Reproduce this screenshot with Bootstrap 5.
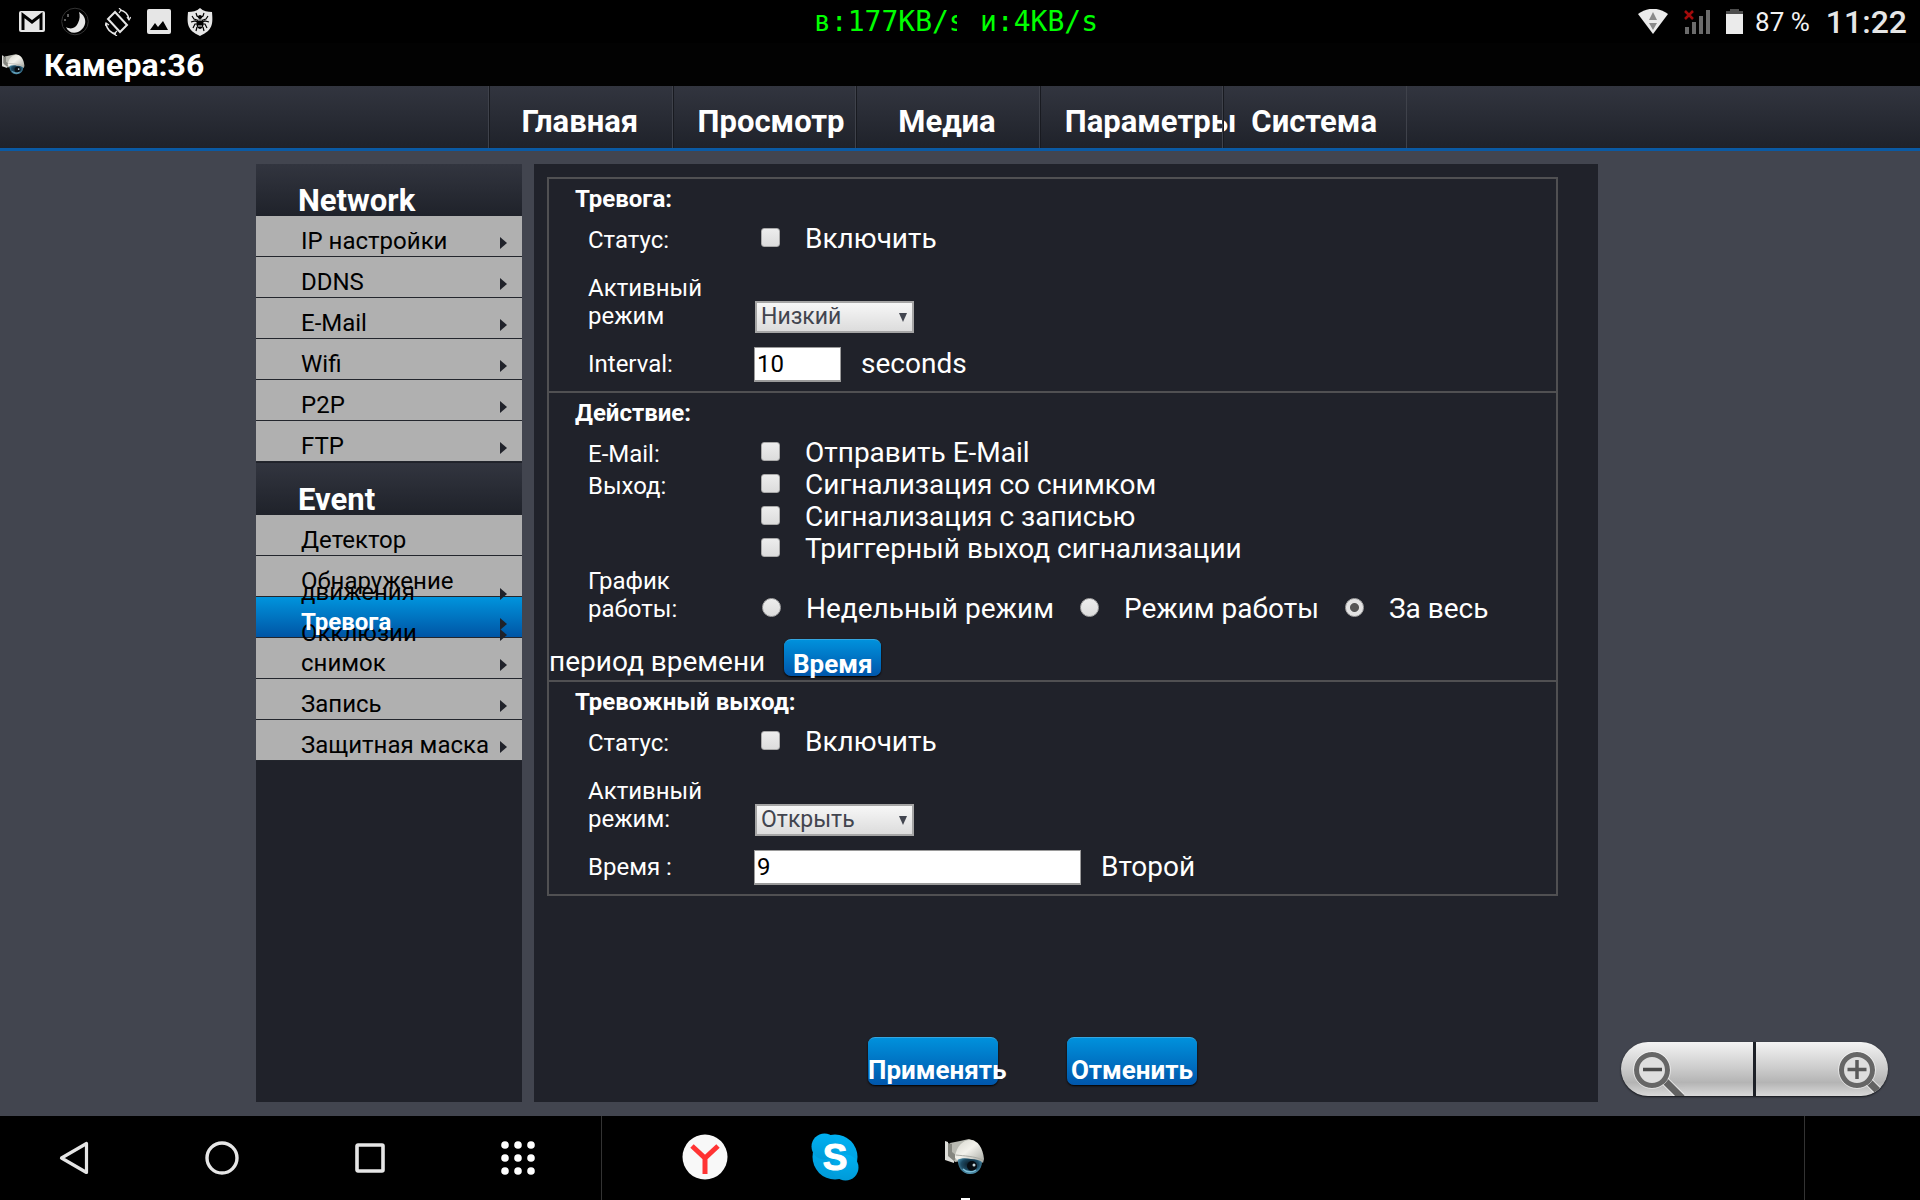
<!DOCTYPE html>
<html lang="ru">
<head>
<meta charset="utf-8">
<meta name="viewport" content="width=device-width, initial-scale=1">
<title>Камера:36</title>
<link href="https://cdn.jsdelivr.net/npm/bootstrap@5.3.0/dist/css/bootstrap.min.css" rel="stylesheet">
<style>
  body { font-family: Roboto, "Noto Sans", sans-serif; background: #42454f; color: #fff; }
  a { text-decoration: none; }
  button { font-family: inherit; }

  /* Android status bar and window title */
  .status-bar { height: 43px; background: #000; padding: 0 13px 0 19px; }
  .status-icons { gap: 16px; }
  .net-speed { font: 28px/36px "DejaVu Sans Mono", monospace; color: #0f0; gap: 23px; left: 814px; top: 4px; }
  .speed-down { width: 143px; white-space: nowrap; overflow: hidden; }
  .battery-text { font-size: 26px; line-height: 36px; color: #f2f2f2; }
  .clock-text { font-size: 32px; line-height: 36px; font-weight: 500; color: #e6e6e6; }
  .title-bar { height: 43px; background: #020202; padding-left: 2px; gap: 19px; }
  .title-bar h1 { font-size: 32px; line-height: 40px; font-weight: 700; }

  /* Top navigation */
  .top-nav { height: 65px; background: linear-gradient(#32353f, #1f222a); border-bottom: 3px solid #0a5aa4; padding: 0 513px 0 488px; }
  .top-nav .nav-cell { flex: 1 1 0; min-width: 0; height: 62px; border-left: 1px solid #3f424b; box-shadow: inset 1px 0 #181a20; padding: 18px 26px 0 25px; }
  .top-nav .nav-cell:last-child { border-right: 1px solid #3f424b; }
  .top-nav a { display: block; color: #fff; font-size: 31px; line-height: 36px; font-weight: 700; text-align: center; white-space: nowrap; }

  /* Workspace */
  .workspace { padding: 13px 322px 14px 256px; gap: 12px; }
  .side-panel { width: 266px; background: #20222a; }
  .side-panel h2 { font-size: 31px; line-height: 32px; font-weight: 700; height: 52px; padding: 21px 0 0 42px; background: linear-gradient(#32353f, #1f222a); }
  .menu-group + .menu-group { margin-top: 1px; }
  .menu-link { display: block; height: 41px; padding: 20px 15px 0 45px; background: #b0b0b0; border-bottom: 1px solid #23262d; color: #000; font-size: 24px; line-height: 11px; white-space: nowrap; }
  .menu-line { display: block; height: 11px; }
  .arrowed::before { content: ""; float: right; clear: right; margin: 1px 0 -3px; border: solid transparent; border-width: 6px 0 6px 7px; border-left-color: #20222a; }
  .menu-link.current { background: linear-gradient(#0094dd, #0055a5); }
  .current .menu-line:first-child { position: relative; color: #fff; font-weight: 700; }

  .main-panel { background: #20222a; padding: 13px 40px 17px 13px; }
  .settings-box { border: 2px solid #505052; border-top: 0; }
  .settings-box section { border-top: 2px solid #505052; padding: 6px 0 9px; }
  .settings-box h3 { font-size: 24px; line-height: 28px; font-weight: 700; padding-left: 26px; margin-bottom: 10px; }
  .line-row { display: flex; align-items: baseline; padding-left: 39px; font-size: 28px; line-height: 32px; }
  .cap-label { width: 167px; flex: none; font-size: 24px; line-height: 28px; }
  .two-line { height: 59px; margin-top: 19px; }
  .field-line { height: 36px; margin-top: 13px; align-items: center; }
  .tick { appearance: none; flex: none; align-self: flex-start; width: 19px; height: 19px; margin: 5px 25px 0 6px; border: 1px solid #a9a9a9; border-radius: 3px; background: linear-gradient(#ededed, #dcdcdc); }
  .tick[type=radio] { border-radius: 50%; margin-left: 7px; }
  .tick[type=radio]:checked { background: radial-gradient(circle, #555 0 4px, #e3e3e3 5px); }
  .choices label + .tick[type=radio] { margin-left: 26px; }
  .drop { appearance: none; width: 159px; height: 32px; border: 2px solid #a5a5a5; border-radius: 0; padding: 0 6px 1px 4px; color: #42454f; font-size: 23px; line-height: 26px;
    background: linear-gradient(#f7f7f7, #dcdcdc); }
  .drop-wrap { position: relative; }
  .drop-wrap::after { content: ""; position: absolute; right: 7px; top: 12px; border: solid transparent; border-width: 9px 4px 0; border-top-color: #42454f; pointer-events: none; }
  .entry { height: 35px; border: 2px solid #9a9a9a; border-width: 1px 1px 2px; border-radius: 0; background: #fff; color: #000; font-size: 24px; line-height: 28px; padding: 1px 2px 0; margin-left: -1px; margin-right: 20px; }
  .entry-short { width: 87px; }
  .entry-long { width: 327px; }
  .schedule-line { height: 60px; padding-top: 2px; align-items: flex-start; }
  .schedule-line .choices { padding-top: 26px; align-items: baseline; }
  .rest-line { padding-left: 0; margin-top: 14px; height: 37px; gap: 19px; align-items: flex-start; }
  .rest-line label { padding-top: 7px; }
  .settings-box section.tight { padding-bottom: 4px; }
  .blue-btn { display: block; border: 0; border-top: 1px solid #35a6e0; border-radius: 7px; background: linear-gradient(#0091dc, #0056ab); box-shadow: 0 1px 2px #000; color: #fff; font-size: 26px; font-weight: 700; line-height: 30px; white-space: nowrap; text-align: center; padding: 11px 0 0; }
  .btn-time { width: 97px; height: 37px; line-height: 26px; }
  .action-row { gap: 69px; padding-left: 321px; }
  .action-row .blue-btn { width: 130px; height: 48px; padding-top: 17px; }

  /* Zoom control floating over the page */
  .zoom-box { position: absolute; right: 32px; bottom: 20px; gap: 3px; border-radius: 27px; background: #1d2027; box-shadow: 0 1px 2px #15171c; }
  .zoom-box button { display: block; width: 132px; height: 54px; border: 0; padding: 0; background: linear-gradient(#f3f3f3, #cfcfcf 45%, #b4b4b4 75%, #d9d9d9); overflow: hidden; }
  .zoom-box button:first-child { border-radius: 27px 0 0 27px; text-align: left; }
  .zoom-box button:last-child { border-radius: 0 27px 27px 0; text-align: right; }

  /* System navigation */
  .sys-bar { height: 84px; background: #000; }
  .sys-bar button { border: 0; background: none; padding: 0; height: 84px; position: relative; }
  .sys-keys { width: 602px; border-right: 1px solid #333; }
  .sys-keys button { width: 148px; }
  .sys-apps { padding-left: 38px; }
  .sys-apps button { width: 130px; padding-bottom: 3px; }
  .sys-apps .running::after { content: ""; position: absolute; left: 61px; bottom: 0; width: 9px; height: 2px; background: #fff; }
  .sys-end { width: 116px; border-left: 1px solid #333; }
  svg { display: block; flex: none; }
  .sys-bar svg { margin: 0 auto; }
  .zoom-box svg { display: inline-block; vertical-align: top; }
</style>
<script src="https://cdn.jsdelivr.net/npm/bootstrap@5.3.0/dist/js/bootstrap.bundle.min.js" defer></script>
</head>
<body>
<svg width="0" height="0" class="position-absolute" aria-hidden="true">
  <defs>
    <linearGradient id="dome" x1="0" y1="0" x2="1" y2="1"><stop offset="0" stop-color="#d6d6cd"/><stop offset=".45" stop-color="#f3f2ec"/><stop offset="1" stop-color="#a3a59f"/></linearGradient>
    <radialGradient id="glass" cx=".5" cy=".4" r=".6"><stop offset="0" stop-color="#0a1620"/><stop offset=".6" stop-color="#1d4a63"/><stop offset="1" stop-color="#5aa0bd"/></radialGradient>
    <linearGradient id="skyp" x1="0" y1="0" x2="0" y2="1"><stop offset="0" stop-color="#00b1f2"/><stop offset="1" stop-color="#009ad8"/></linearGradient>
    <symbol id="cam" viewBox="0 0 40 36">
      <path d="M5 4l10-2 9-2 6 2-14 20-6 1-5-6z" fill="#b9bab2"/>
      <path d="M0 2l3 1v13l6 3v5l-9-3z" fill="#dededa"/>
      <path d="M3 4l4 1v8l5 4-3 5-6-5z" fill="#85867f"/>
      <path d="M13 19h24c1 10-4 16-12 16s-13-7-12-16z" fill="url(#glass)"/>
      <circle cx="27" cy="27" r="5" fill="#060c12"/><circle cx="29" cy="26" r="1.500" fill="#c7d8df"/>
      <path d="M18 30c3 3 9 4 13 1" fill="none" stroke="#7cbdd6" stroke-width="1.500"/>
      <path d="M10 17C12 7 18 1 25 1c8 0 13 8 14 19l-1 4c-3-3-7-4-12-4-5-1-10-1-14 1l-2-2z" fill="url(#dome)"/>
      <path d="M11 16c8 1 18 1 27 5" fill="none" stroke="#a9aaa4"/>
    </symbol>
  </defs>
</svg>
<div class="d-flex flex-column min-vh-100">
  <header>
    <div class="status-bar d-flex justify-content-between position-relative">
      <div class="status-icons d-flex align-items-center">
        <svg width="26" height="21" viewBox="0 0 26 21"><rect width="26" height="21" rx="2" fill="#e6e6e6"/><path d="M4 19V4l9 7 9-7v15" fill="none" stroke="#000" stroke-width="3"/></svg>
        <svg width="28" height="29" viewBox="0 0 28 29"><circle cx="14" cy="14.500" r="13.300" fill="#000" stroke="#333"/><path d="M18 5c9 5 8 16-1 20-5 2-10 0-12-5 5 3 10 1 12-4 2-4 2-8 1-11z" fill="#e6e6e6"/><path d="M7 7v3M4 12v2" stroke="#bbb"/></svg>
        <svg width="26" height="28" viewBox="0 0 26 28" fill="none" stroke="#e6e6e6" stroke-width="2"><path d="M10 4L22 17 15 24 3 11z"/><path d="M15 2c5 1 8 4 9 9M11 26c-5-1-9-5-10-10" stroke-width="1.500"/><path d="M14 0l2 2-2 3M22 9l2 3 2-3M12 28l-3-2 3-3M0 18l1-3 3 2" stroke-width="1.200"/></svg>
        <svg width="24" height="25" viewBox="0 0 24 25"><rect width="24" height="25" rx="2" fill="#e6e6e6"/><path d="M3 21l5-7 3 4 5-6 5 9z" fill="#000"/></svg>
        <svg width="26" height="28" viewBox="0 0 26 28"><path d="M13 0c3 3 8 4 12 4 1 12 1 18-12 24C0 22 0 16 1 4c4 0 9-1 12-4z" fill="#e6e6e6"/><ellipse cx="13" cy="16" rx="3.500" ry="5" fill="#000"/><circle cx="13" cy="9" r="2" fill="#000"/><path d="M9 5l1 3 3 2 3-2 1-3M5 8l2 3 6 2 6-2 2-3M4 14l4-1 5 2 5-2 4 1M6 20l2-4 5 0 5 0 2 4M9 23l1-4M17 23l-1-4" fill="none" stroke="#000" stroke-width="1.200"/><path d="M11 12h4M11 18h4" stroke="#e6e6e6"/></svg>
      </div>
      <div class="net-speed d-flex position-absolute"><span class="speed-down">в:177KB/s</span><span>и:4KB/s</span></div>
      <div class="d-flex align-items-center">
        <svg class="me-3" width="30" height="25" viewBox="0 0 30 25"><path d="M0 5C9-2 21-2 30 5L15 25z" fill="#ebebeb"/><path d="M11 11l4-8 4 8zM11 14h8l-4 7z" fill="#8a8a8a"/></svg>
        <svg class="me-3" width="26" height="24" viewBox="0 0 26 24"><path d="M1 17h4v7H1zM8 12h4v12H8zM15 6h4v18h-4zM22 0h4v24h-4z" fill="#6b6b6b"/><path d="M1 1l8 8M9 1l-8 8" stroke="#a30b0b" stroke-width="2.500"/></svg>
        <svg width="17" height="25" viewBox="0 0 17 25"><path d="M4 0h9v2h4v3H0V2h4z" fill="#4d4d4d"/><path d="M0 5h17v20H0z" fill="#ebebeb"/></svg>
        <span class="battery-text ps-2 ms-1">87 %</span>
        <span class="clock-text ps-3">11:22</span>
      </div>
    </div>
    <div class="title-bar d-flex align-items-center">
      <svg width="23" height="21"><use href="#cam" width="23" height="21"/></svg>
      <h1 class="m-0">Камера:36</h1>
    </div>
    <nav class="top-nav d-flex">
      <div class="nav-cell"><a href="#">Главная</a></div>
      <div class="nav-cell"><a href="#">Просмотр</a></div>
      <div class="nav-cell"><a href="#">Медиа</a></div>
      <div class="nav-cell"><a href="#">Параметры</a></div>
      <div class="nav-cell"><a href="#">Система</a></div>
    </nav>
  </header>

  <div class="workspace d-flex flex-grow-1 position-relative">
    <aside class="side-panel flex-shrink-0">
      <div class="menu-group">
        <h2 class="m-0">Network</h2>
        <ul class="list-unstyled m-0">
          <li><a class="menu-link" href="#"><span class="menu-line arrowed">IP настройки</span></a></li>
          <li><a class="menu-link" href="#"><span class="menu-line arrowed">DDNS</span></a></li>
          <li><a class="menu-link" href="#"><span class="menu-line arrowed">E-Mail</span></a></li>
          <li><a class="menu-link" href="#"><span class="menu-line arrowed">Wifi</span></a></li>
          <li><a class="menu-link" href="#"><span class="menu-line arrowed">P2P</span></a></li>
          <li><a class="menu-link" href="#"><span class="menu-line arrowed">FTP</span></a></li>
        </ul>
      </div>
      <div class="menu-group">
        <h2 class="m-0">Event</h2>
        <ul class="list-unstyled m-0">
          <li><a class="menu-link" href="#"><span class="menu-line">Детектор</span></a></li>
          <li><a class="menu-link" href="#"><span class="menu-line">Обнаружение</span><span class="menu-line arrowed">движения</span></a></li>
          <li><a class="menu-link current" href="#" aria-current="page"><span class="menu-line arrowed">Тревога</span><span class="menu-line arrowed">Окклюзии</span></a></li>
          <li><a class="menu-link" href="#"><span class="menu-line arrowed">снимок</span></a></li>
          <li><a class="menu-link" href="#"><span class="menu-line arrowed">Запись</span></a></li>
          <li><a class="menu-link" href="#"><span class="menu-line arrowed">Защитная маска</span></a></li>
        </ul>
      </div>
    </aside>

    <main class="main-panel flex-grow-1 d-flex flex-column">
      <form class="d-flex flex-column flex-grow-1">
        <div class="settings-box">
          <section>
            <h3>Тревога:</h3>
            <div class="line-row"><span class="cap-label">Статус:</span><input class="tick" type="checkbox" id="alarmOn"><label for="alarmOn">Включить</label></div>
            <div class="line-row two-line"><label class="cap-label" for="alarmMode">Активный<br>режим</label><div class="drop-wrap align-self-end"><select class="drop d-block" id="alarmMode"><option>Низкий</option><option>Высокий</option></select></div></div>
            <div class="line-row field-line"><label class="cap-label" for="interval">Interval:</label><input class="entry entry-short" type="text" id="interval" value="10"><span>seconds</span></div>
          </section>
          <section class="tight">
            <h3>Действие:</h3>
            <div class="line-row"><span class="cap-label">E-Mail:</span><input class="tick" type="checkbox" id="sendMail"><label for="sendMail">Отправить E-Mail</label></div>
            <div class="line-row"><span class="cap-label">Выход:</span><input class="tick" type="checkbox" id="withShot"><label for="withShot">Сигнализация со снимком</label></div>
            <div class="line-row"><span class="cap-label"></span><input class="tick" type="checkbox" id="withRec"><label for="withRec">Сигнализация с записью</label></div>
            <div class="line-row"><span class="cap-label"></span><input class="tick" type="checkbox" id="trigger"><label for="trigger">Триггерный выход сигнализации</label></div>
            <div class="line-row schedule-line">
              <span class="cap-label">График<br>работы:</span>
              <div class="choices d-flex">
                <input class="tick" type="radio" name="plan" id="planWeek"><label for="planWeek">Недельный режим</label>
                <input class="tick" type="radio" name="plan" id="planWork"><label for="planWork">Режим работы</label>
                <input class="tick" type="radio" name="plan" id="planAll" checked><label for="planAll">За весь</label>
              </div>
            </div>
            <div class="line-row rest-line"><label for="planAll">период времени</label><button type="button" class="blue-btn btn-time">Время</button></div>
          </section>
          <section>
            <h3>Тревожный выход:</h3>
            <div class="line-row"><span class="cap-label">Статус:</span><input class="tick" type="checkbox" id="outOn"><label for="outOn">Включить</label></div>
            <div class="line-row two-line"><label class="cap-label" for="outMode">Активный<br>режим:</label><div class="drop-wrap align-self-end"><select class="drop d-block" id="outMode"><option>Открыть</option><option>Закрыть</option></select></div></div>
            <div class="line-row field-line"><label class="cap-label" for="outTime">Время :</label><input class="entry entry-long" type="text" id="outTime" value="9"><span>Второй</span></div>
          </section>
        </div>
        <div class="action-row d-flex mt-auto">
          <button type="submit" class="blue-btn">Применять</button>
          <button type="reset" class="blue-btn">Отменить</button>
        </div>
      </form>
    </main>

    <div class="zoom-box d-flex">
      <button type="button" aria-label="Уменьшить">
        <svg width="64" height="54" viewBox="0 0 64 54"><path d="M42 37l18 18" stroke="#fff" stroke-width="9" opacity=".6"/><path d="M42 37l19 19" stroke="#626262" stroke-width="7"/><circle cx="31" cy="28" r="15.500" fill="#dedede" stroke="#666" stroke-width="5"/><circle cx="31" cy="28" r="18.500" fill="none" stroke="#fff" opacity=".5"/><path d="M22 27.500h19" stroke="#4a4a4a" stroke-width="3.500"/></svg>
      </button>
      <button type="button" aria-label="Увеличить">
        <svg width="64" height="54" viewBox="0 0 64 54"><path d="M42 37l18 18" stroke="#fff" stroke-width="9" opacity=".6"/><path d="M42 37l19 19" stroke="#626262" stroke-width="7"/><circle cx="33" cy="28" r="15.500" fill="#dedede" stroke="#666" stroke-width="5"/><circle cx="33" cy="28" r="18.500" fill="none" stroke="#fff" opacity=".5"/><path d="M23.500 27.500h19M33 18v19" stroke="#5a5a5a" stroke-width="3.500"/></svg>
      </button>
    </div>
  </div>

  <footer class="sys-bar d-flex">
    <div class="sys-keys d-flex">
      <button type="button" aria-label="Назад"><svg width="30" height="34" viewBox="0 0 30 34"><path d="M27.500 2.500v29L2.500 17z" fill="none" stroke="#e6e6e6" stroke-width="3.200" stroke-linejoin="round"/></svg></button>
      <button type="button" aria-label="Домой"><svg width="34" height="34" viewBox="0 0 34 34"><circle cx="17" cy="17" r="15" fill="none" stroke="#e6e6e6" stroke-width="3.400"/></svg></button>
      <button type="button" aria-label="Обзор"><svg width="30" height="30" viewBox="0 0 30 30"><rect x="2" y="2" width="26" height="26" rx="1" fill="none" stroke="#e6e6e6" stroke-width="3.600"/></svg></button>
      <button type="button" aria-label="Приложения"><svg width="34" height="34" viewBox="0 0 34 34" fill="#fff"><circle cx="4" cy="4" r="3.800"/><circle cx="17" cy="4" r="3.800"/><circle cx="30" cy="4" r="3.800"/><circle cx="4" cy="17" r="3.800"/><circle cx="17" cy="17" r="3.800"/><circle cx="30" cy="17" r="3.800"/><circle cx="4" cy="30" r="3.800"/><circle cx="17" cy="30" r="3.800"/><circle cx="30" cy="30" r="3.800"/></svg></button>
    </div>
    <div class="sys-apps d-flex flex-grow-1">
      <button type="button" aria-label="Yandex"><svg width="46" height="46" viewBox="0 0 46 46"><circle cx="23" cy="23" r="22.500" fill="#f8f8f8"/><path d="M10 12l13 12 13-12M23 23v17" fill="none" stroke="#f33" stroke-width="5"/></svg></button>
      <button type="button" aria-label="Skype"><svg width="48" height="48" viewBox="0 0 48 48"><g fill="url(#skyp)"><circle cx="24" cy="24" r="22.500"/><circle cx="13.500" cy="13.500" r="13"/><circle cx="34.500" cy="34.500" r="13"/></g><text x="24" y="37" text-anchor="middle" font-family="Liberation Sans, sans-serif" font-weight="700" font-size="37" fill="#fff" stroke="#fff">S</text></svg></button>
      <button type="button" class="running" aria-label="Камера"><svg width="40" height="36"><use href="#cam" width="40" height="36"/></svg></button>
    </div>
    <div class="sys-end"></div>
  </footer>
</div>
</body>
</html>
